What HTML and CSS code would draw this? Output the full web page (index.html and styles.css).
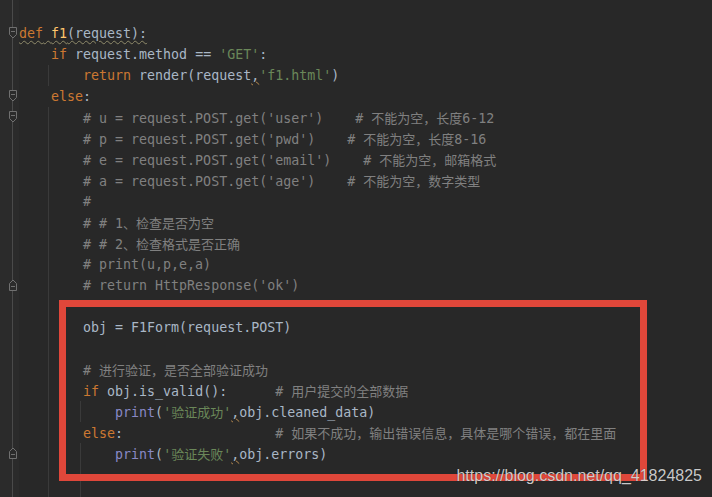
FILE: index.html
```html
<!DOCTYPE html>
<html lang="zh">
<head>
<meta charset="utf-8">
<title>f1 view</title>
<link rel="stylesheet" href="styles.css">
</head>
<body>
<div class="editor">
  <div class="gutter">
    <div class="grow"></div>
    <div class="grow"><svg class="fold" viewBox="0 0 10 12"><path d="M1.5 0.5H8.5V7.5L5 11L1.5 7.5Z"/><path d="M3 4.5H7"/></svg></div>
    <div class="grow"></div>
    <div class="grow"></div>
    <div class="grow"><svg class="fold" viewBox="0 0 10 12"><path d="M1.5 0.5H8.5V7.5L5 11L1.5 7.5Z"/><path d="M3 4.5H7"/></svg></div>
    <div class="grow"><svg class="fold" viewBox="0 0 10 12"><path d="M1.5 0.5H8.5V7.5L5 11L1.5 7.5Z"/><path d="M3 4.5H7"/></svg></div>
    <div class="grow"></div>
    <div class="grow"></div>
    <div class="grow"></div>
    <div class="grow"></div>
    <div class="grow"></div>
    <div class="grow"></div>
    <div class="grow"></div>
    <div class="grow"><svg class="fold" viewBox="0 0 10 12"><path d="M1.5 11.5H8.5V4.5L5 1L1.5 4.5Z"/><path d="M3 7.5H7"/></svg></div>
    <div class="grow"></div>
    <div class="grow"></div>
    <div class="grow"></div>
    <div class="grow"></div>
    <div class="grow"></div>
    <div class="grow"></div>
    <div class="grow"></div>
    <div class="grow"><svg class="fold" viewBox="0 0 10 12"><path d="M1.5 11.5H8.5V4.5L5 1L1.5 4.5Z"/><path d="M3 7.5H7"/></svg></div>
    <div class="grow"></div>
    <div class="grow"></div>
  </div>
  <div class="code">
    <div class="line"></div>
    <div class="line"><span class="warn"><span class="k">def</span> <span class="f">f1</span>(request):</span></div>
    <div class="line">    <span class="k">if</span> request.method == <span class="s">'GET'</span>:</div>
    <div class="line g1">        <span class="k">return</span> render(request<span class="w">,</span><span class="s">'f1.html'</span>)</div>
    <div class="line">    <span class="k">else</span>:</div>
    <div class="line g1 c">        # u = request.POST.get('user')    # <span class="z">不能为空，长度</span>6-12</div>
    <div class="line g1 c">        # p = request.POST.get('pwd')    # <span class="z">不能为空，长度</span>8-16</div>
    <div class="line g1 c">        # e = request.POST.get('email')    # <span class="z">不能为空，邮箱格式</span></div>
    <div class="line g1 c">        # a = request.POST.get('age')    # <span class="z">不能为空，数字类型</span></div>
    <div class="line g1 c">        #</div>
    <div class="line g1 c">        # # 1<span class="z">、检查是否为空</span></div>
    <div class="line g1 c">        # # 2<span class="z">、检查格式是否正确</span></div>
    <div class="line g1 c">        # print(u,p,e,a)</div>
    <div class="line g1 c">        # return HttpResponse('ok')</div>
    <div class="line g1"></div>
    <div class="line g1">        obj = F1Form(request.POST)</div>
    <div class="line g1"></div>
    <div class="line g1 c">        # <span class="z">进行验证，是否全部验证成功</span></div>
    <div class="line g1">        <span class="k">if</span> obj.is_valid():      <span class="c"># <span class="z">用户提交的全部数据</span></span></div>
    <div class="line g1 g2">            <span class="b">print</span>(<span class="s">'<span class="z">验证成功</span>'</span><span class="w">,</span>obj.cleaned_data)</div>
    <div class="line g1">        <span class="k">else</span>:                   <span class="c"># <span class="z">如果不成功，输出错误信息，具体是哪个错误，都在里面</span></span></div>
    <div class="line g1 g2">            <span class="b">print</span>(<span class="s">'<span class="z">验证失败</span>'</span><span class="w">,</span>obj.errors)</div>
    <div class="line g1 g2"></div>
    <div class="line g1 g2"></div>
  </div>
  <div class="highlight"></div>
  <div class="watermark">https://blog.csdn.net/qq_41824825</div>
</div>
</body>
</html>
```
FILE: styles.css
```css
html, body {
  margin: 0;
  padding: 0;
  background: #282828;
}

.editor {
  position: relative;
  width: 712px;
  height: 497px;
  overflow: hidden;
  display: flex;
  background: #282828;
}

.gutter {
  width: 19px;
  flex: none;
  padding-top: 1px;
  background:
    linear-gradient(#4a4a4a, #4a4a4a) no-repeat 12px 0 / 1px 100%,
    #2b2b2b;
}

.grow {
  height: 21px;
  display: flex;
  align-items: center;
  padding-left: 8px;
}

.fold {
  width: 10px;
  height: 12px;
  fill: #2b2b2b;
  stroke: #707070;
  stroke-width: 1;
}

.code {
  flex: 1;
  padding-top: 2px;
  font-family: "DejaVu Sans Mono", "Noto Sans CJK SC", monospace;
  font-size: 13.3px;
  color: #a9b7c6;
}

.line {
  height: 21px;
  line-height: 21px;
  white-space: pre;
}

.z {
  font-family: "Noto Sans CJK SC", sans-serif;
  font-size: 13px;
}

.g1 {
  background: linear-gradient(#3a3a3a, #3a3a3a) no-repeat 29px 0 / 1px 100%;
}

.g1.g2 {
  background:
    linear-gradient(#3a3a3a, #3a3a3a) no-repeat 29px 0 / 1px 100%,
    linear-gradient(#3a3a3a, #3a3a3a) no-repeat 61px 0 / 1px 100%;
}

.k { color: #cc7832; }
.s { color: #6a8759; }
.c { color: #808080; }
.f { color: #ffc66d; }
.b { color: #8888c6; }

.warn {
  text-decoration: underline wavy #8f8a6a;
  text-decoration-thickness: 1px;
  text-underline-offset: 2px;
}

.w {
  text-decoration: underline wavy #b98a4e;
  text-decoration-thickness: 1px;
  text-underline-offset: 1px;
}

.highlight {
  position: absolute;
  left: 59px;
  top: 300px;
  width: 588px;
  height: 181px;
  box-sizing: border-box;
  border: 7px solid #e0473a;
}

.watermark {
  position: absolute;
  right: 10px;
  top: 467px;
  font-family: "Liberation Sans", Arial, sans-serif;
  font-size: 16px;
  line-height: 18px;
  color: rgba(235, 235, 235, 0.85);
  text-shadow: 0 0 1px rgba(0, 0, 0, 0.6);
}
```
